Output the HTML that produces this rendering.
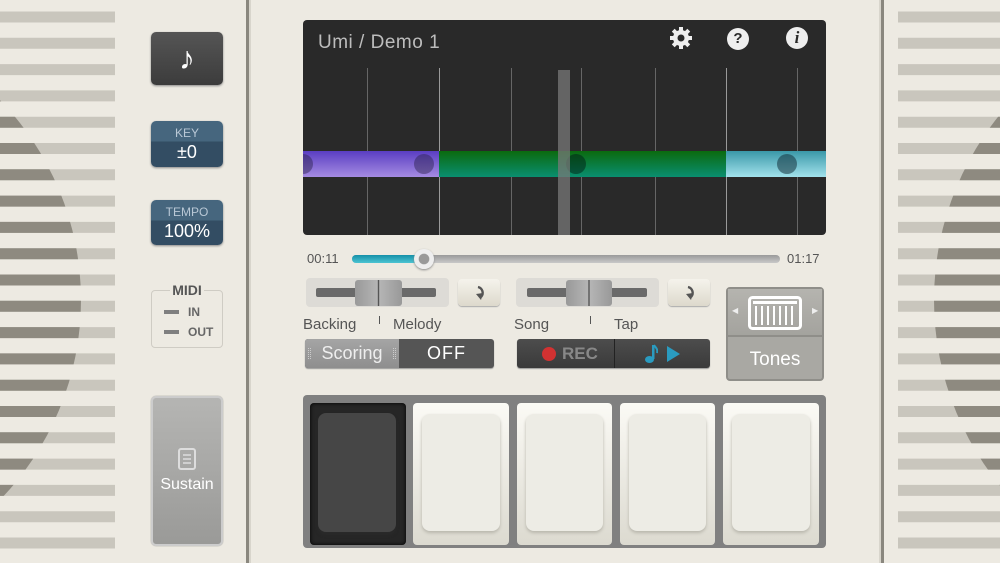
<!DOCTYPE html>
<html><head><meta charset="utf-8"><style>
*{margin:0;padding:0;box-sizing:border-box}
html,body{width:1000px;height:563px;overflow:hidden}
body{background:#edeae2;font-family:"Liberation Sans",sans-serif;position:relative}
.a{position:absolute}
.lbl{font-size:15px;color:#555}
.btn{border-radius:5px}
</style></head><body>
<svg class="a" style="left:0;top:0" width="1000" height="563">
<defs>
<clipPath id="s">
<rect x="0" y="11.5" width="115" height="11"/><rect x="0" y="37.8" width="115" height="11"/><rect x="0" y="64.1" width="115" height="11"/><rect x="0" y="90.4" width="115" height="11"/><rect x="0" y="116.7" width="115" height="11"/><rect x="0" y="143" width="115" height="11"/><rect x="0" y="169.3" width="115" height="11"/><rect x="0" y="195.6" width="115" height="11"/><rect x="0" y="221.9" width="115" height="11"/><rect x="0" y="248.2" width="115" height="11"/><rect x="0" y="274.5" width="115" height="11"/><rect x="0" y="300.8" width="115" height="11"/><rect x="0" y="327.1" width="115" height="11"/><rect x="0" y="353.4" width="115" height="11"/><rect x="0" y="379.7" width="115" height="11"/><rect x="0" y="406" width="115" height="11"/><rect x="0" y="432.3" width="115" height="11"/><rect x="0" y="458.6" width="115" height="11"/><rect x="0" y="484.9" width="115" height="11"/><rect x="0" y="511.2" width="115" height="11"/><rect x="0" y="537.5" width="115" height="11"/>
<rect x="898" y="11.5" width="102" height="11"/><rect x="898" y="37.8" width="102" height="11"/><rect x="898" y="64.1" width="102" height="11"/><rect x="898" y="90.4" width="102" height="11"/><rect x="898" y="116.7" width="102" height="11"/><rect x="898" y="143" width="102" height="11"/><rect x="898" y="169.3" width="102" height="11"/><rect x="898" y="195.6" width="102" height="11"/><rect x="898" y="221.9" width="102" height="11"/><rect x="898" y="248.2" width="102" height="11"/><rect x="898" y="274.5" width="102" height="11"/><rect x="898" y="300.8" width="102" height="11"/><rect x="898" y="327.1" width="102" height="11"/><rect x="898" y="353.4" width="102" height="11"/><rect x="898" y="379.7" width="102" height="11"/><rect x="898" y="406" width="102" height="11"/><rect x="898" y="432.3" width="102" height="11"/><rect x="898" y="458.6" width="102" height="11"/><rect x="898" y="484.9" width="102" height="11"/><rect x="898" y="511.2" width="102" height="11"/><rect x="898" y="537.5" width="102" height="11"/>
</clipPath>
<linearGradient id="sg" x1="0" y1="0" x2="0" y2="1"><stop offset="0" stop-color="#b8b5ac"/><stop offset="1" stop-color="#d0cdc4"/></linearGradient>
</defs>
<g clip-path="url(#s)">
<rect x="0" y="0" width="1000" height="563" fill="#c9c6bd"/>
<circle cx="-206" cy="300" r="287" fill="#8e8a80"/>
<circle cx="1228" cy="300" r="294" fill="#8e8a80"/>
</g>
<rect x="246" y="0" width="3" height="563" fill="#8a877e"/>
<rect x="249" y="0" width="2" height="563" fill="#d8d5cc"/>
<rect x="881" y="0" width="3" height="563" fill="#8a877e"/>
<rect x="879" y="0" width="2" height="563" fill="#d8d5cc"/>
</svg>

<div class="a btn" style="left:151px;top:32px;width:72px;height:53px;background:linear-gradient(#555,#3c3c3c);box-shadow:0 1px 2px #888;color:#fff;font-size:32px;text-align:center;line-height:52px">♪</div>
<div class="a btn" style="left:151px;top:121px;width:72px;height:46px;background:linear-gradient(#46667e 0 45%,#334d63 45%);color:#fff;text-align:center;box-shadow:0 1px 2px #888">
<div style="font-size:12px;color:#b9c8d6;margin-top:5px">KEY</div><div style="font-size:18px;margin-top:2px">±0</div></div>
<div class="a btn" style="left:151px;top:200px;width:72px;height:45px;background:linear-gradient(#46667e 0 45%,#334d63 45%);color:#fff;text-align:center;box-shadow:0 1px 2px #888">
<div style="font-size:12px;color:#b9c8d6;margin-top:5px">TEMPO</div><div style="font-size:18px;margin-top:2px">100%</div></div>
<div class="a" style="left:151px;top:290px;width:72px;height:58px;border:1px solid #cfccc4;border-radius:4px"></div>
<div class="a" style="left:170px;top:282px;width:34px;height:16px;background:#edeae2;color:#555;font-size:14px;font-weight:bold;text-align:center">MIDI</div>
<div class="a" style="left:164px;top:310px;width:15px;height:4px;background:#7f7f7f"></div>
<div class="a" style="left:188px;top:305px;font-size:12px;color:#666;font-weight:bold">IN</div>
<div class="a" style="left:164px;top:330px;width:15px;height:4px;background:#7f7f7f"></div>
<div class="a" style="left:188px;top:325px;font-size:12px;color:#666;font-weight:bold">OUT</div>
<div class="a btn" style="left:151px;top:396px;width:72px;height:150px;background:linear-gradient(#b5b5b3,#9a9a98);border:2px solid #ccc;box-shadow:0 0 1px #777;color:#fff;text-align:center">
<svg style="display:block;margin:50px auto 0" width="18" height="22" viewBox="0 0 18 22"><rect x="1" y="1" width="16" height="20" rx="2" fill="none" stroke="#ddd" stroke-width="2"/><path d="M5 7h8M5 11h8M5 15h8" stroke="#ddd" stroke-width="1.5"/></svg>
<div style="font-size:16px;margin-top:6px">Sustain</div></div>

<div class="a" style="left:303px;top:20px;width:523px;height:215px;background:#292929;border-radius:4px;overflow:hidden">
<div class="a" style="left:15px;top:12px;font-size:19px;color:#bdbdbd;letter-spacing:0.5px">Umi / Demo 1</div>
<div class="a" style="left:64px;top:48px;width:1px;height:170px;background:#666"></div>
<div class="a" style="left:136px;top:48px;width:1px;height:170px;background:#999"></div>
<div class="a" style="left:208px;top:48px;width:1px;height:170px;background:#666"></div>
<div class="a" style="left:278px;top:48px;width:1px;height:170px;background:#666"></div>
<div class="a" style="left:352px;top:48px;width:1px;height:170px;background:#666"></div>
<div class="a" style="left:423px;top:48px;width:1px;height:170px;background:#999"></div>
<div class="a" style="left:494px;top:48px;width:1px;height:170px;background:#666"></div>
<div class="a" style="left:0;top:131px;width:136px;height:26px;background:linear-gradient(#5a3ec2,#a58be2)"></div>
<div class="a" style="left:136px;top:131px;width:287px;height:26px;background:linear-gradient(#0b6a0e,#0a8e70)"></div>
<div class="a" style="left:423px;top:131px;width:100px;height:26px;background:linear-gradient(#3a98a8,#a2e2ec)"></div>
<div class="a" style="left:-10px;top:134px;width:20px;height:20px;border-radius:50%;background:rgba(40,30,70,.45)"></div>
<div class="a" style="left:111px;top:134px;width:20px;height:20px;border-radius:50%;background:rgba(40,30,70,.45)"></div>
<div class="a" style="left:263px;top:134px;width:20px;height:20px;border-radius:50%;background:rgba(0,30,20,.5)"></div>
<div class="a" style="left:474px;top:134px;width:20px;height:20px;border-radius:50%;background:rgba(20,50,60,.55)"></div>
<div class="a" style="left:255px;top:50px;width:12px;height:170px;background:rgba(120,120,120,.75)"></div>
<svg class="a" style="left:366px;top:6px" width="24" height="24" viewBox="0 0 24 24"><g fill="#eee"><circle cx="12" cy="12" r="8"/><rect x="10" y="1" width="4" height="22"/><rect x="10" y="1" width="4" height="22" transform="rotate(45 12 12)"/><rect x="10" y="1" width="4" height="22" transform="rotate(90 12 12)"/><rect x="10" y="1" width="4" height="22" transform="rotate(135 12 12)"/></g><circle cx="12" cy="12" r="3.5" fill="#292929"/></svg>
<div class="a" style="left:424px;top:8px;width:22px;height:22px;border-radius:50%;background:#eee;color:#292929;font-weight:bold;font-size:15px;text-align:center;line-height:22px">?</div>
<div class="a" style="left:483px;top:7px;width:22px;height:22px;border-radius:50%;background:#eee;color:#292929;font-weight:bold;font-style:italic;font-family:'Liberation Serif',serif;font-size:17px;text-align:center;line-height:22px">i</div>
</div>

<div class="a" style="left:307px;top:251px;font-size:13px;color:#555">00:11</div>
<div class="a" style="left:787px;top:251px;font-size:13px;color:#555">01:17</div>
<div class="a" style="left:352px;top:255px;width:428px;height:8px;border-radius:4px;background:linear-gradient(#9a9a9a,#c8c8c8)"></div>
<div class="a" style="left:352px;top:255px;width:72px;height:8px;border-radius:4px;background:linear-gradient(#1590a8,#4cc4d2)"></div>
<div class="a" style="left:414px;top:249px;width:20px;height:20px;border-radius:50%;background:radial-gradient(#999 0 35%,#eee 40%);box-shadow:0 1px 2px #888"></div>

<div class="a" style="left:306px;top:278px;width:143px;height:29px;background:#dddbd6;border-radius:4px"></div>
<div class="a" style="left:316px;top:288px;width:120px;height:9px;background:#6a6a6a;border-radius:2px"></div>
<div class="a" style="left:355px;top:280px;width:47px;height:26px;background:linear-gradient(90deg,#999,#b5b5b5 48%,#555 49%,#555 51%,#b5b5b5 52%,#999);border-radius:3px"></div>
<div class="a" style="left:458px;top:279px;width:42px;height:27px;background:linear-gradient(#f5f3ec,#ddd9cc);border-radius:4px;box-shadow:0 1px 1px #aaa"><svg class="a" style="left:12px;top:5px" width="18" height="18" viewBox="0 0 18 18"><path d="M8 3 A6 6 0 0 1 11 13" fill="none" stroke="#555" stroke-width="2.4"/><path d="M6 10 L13 9 L11 16Z" fill="#555"/></svg></div>
<div class="a" style="left:516px;top:278px;width:143px;height:29px;background:#dddbd6;border-radius:4px"></div>
<div class="a" style="left:527px;top:288px;width:120px;height:9px;background:#6a6a6a;border-radius:2px"></div>
<div class="a" style="left:566px;top:280px;width:46px;height:26px;background:linear-gradient(90deg,#999,#b5b5b5 48%,#555 49%,#555 51%,#b5b5b5 52%,#999);border-radius:3px"></div>
<div class="a" style="left:668px;top:279px;width:42px;height:27px;background:linear-gradient(#f5f3ec,#ddd9cc);border-radius:4px;box-shadow:0 1px 1px #aaa"><svg class="a" style="left:12px;top:5px" width="18" height="18" viewBox="0 0 18 18"><path d="M8 3 A6 6 0 0 1 11 13" fill="none" stroke="#555" stroke-width="2.4"/><path d="M6 10 L13 9 L11 16Z" fill="#555"/></svg></div>

<div class="a lbl" style="left:303px;top:316px">Backing</div>
<div class="a" style="left:379px;top:316px;width:1px;height:8px;background:#555"></div>
<div class="a lbl" style="left:393px;top:316px">Melody</div>
<div class="a lbl" style="left:514px;top:316px">Song</div>
<div class="a" style="left:590px;top:316px;width:1px;height:8px;background:#555"></div>
<div class="a lbl" style="left:614px;top:316px">Tap</div>

<div class="a" style="left:305px;top:339px;width:189px;height:29px;border-radius:3px;background:#555;box-shadow:0 1px 1px #999;overflow:hidden">
<div class="a" style="left:0;top:0;width:94px;height:29px;background:linear-gradient(#a5a5a5,#8e8e8e);color:#eee;font-size:18px;text-align:center;line-height:29px">Scoring</div>
<div class="a" style="left:3px;top:9px;width:3px;height:11px;border-left:1px dotted #ccc;border-right:1px dotted #ccc"></div>
<div class="a" style="left:88px;top:9px;width:3px;height:11px;border-left:1px dotted #ccc;border-right:1px dotted #ccc"></div>
<div class="a" style="left:94px;top:0;width:95px;height:29px;color:#fff;font-size:18px;text-align:center;line-height:29px;letter-spacing:1px">OFF</div></div>
<div class="a" style="left:517px;top:339px;width:193px;height:29px;border-radius:3px;background:linear-gradient(#4d4d4d,#3a3a3a);box-shadow:0 1px 1px #999">
<div class="a" style="left:25px;top:8px;width:14px;height:14px;border-radius:50%;background:#d23232"></div>
<div class="a" style="left:45px;top:5px;color:#888;font-size:17px;font-weight:bold">REC</div>
<div class="a" style="left:97px;top:0;width:1px;height:29px;background:#222"></div>
<svg class="a" style="left:127px;top:5px" width="14" height="20" viewBox="0 0 14 20"><rect x="8" y="1" width="2.5" height="14" fill="#2a9bc0"/><ellipse cx="5.5" cy="15.5" rx="4.5" ry="3.5" fill="#2a9bc0"/><path d="M10 1 C12 4 14 5 13 9" fill="none" stroke="#2a9bc0" stroke-width="2"/></svg>
<div class="a" style="left:150px;top:7px;width:0;height:0;border-left:13px solid #2a9bc0;border-top:8px solid transparent;border-bottom:8px solid transparent"></div>
</div>

<div class="a" style="left:726px;top:287px;width:98px;height:94px;border-radius:4px;background:#a9a8a3;border:2px solid #8f8e89">
<div class="a" style="left:0;top:0;width:94px;height:48px;border-bottom:2px solid #8f8e89;background:linear-gradient(#b5b4af,#a4a39e)"></div>
<svg class="a" style="left:20px;top:7px" width="54" height="34" viewBox="0 0 54 34"><rect x="1.5" y="1.5" width="51" height="31" rx="3" fill="none" stroke="#fff" stroke-width="3"/><rect x="5" y="5" width="44" height="3" fill="#fff"/><g fill="#fff"><rect x="7" y="10" width="2" height="19"/><rect x="13" y="10" width="2" height="19"/><rect x="19" y="10" width="2" height="19"/><rect x="25" y="10" width="2" height="19"/><rect x="31" y="10" width="2" height="19"/><rect x="37" y="10" width="2" height="19"/><rect x="43" y="10" width="2" height="19"/></g></svg>
<div class="a" style="left:4px;top:17px;color:#eee;font-size:8px">◀</div>
<div class="a" style="left:84px;top:17px;color:#eee;font-size:8px">▶</div>
<div class="a" style="left:0;top:60px;width:94px;text-align:center;color:#fff;font-size:19px">Tones</div>
</div>

<div class="a" style="left:303px;top:395px;width:523px;height:153px;background:#808080;border-radius:4px"></div>
<div class="a" style="left:310px;top:403px;width:96px;height:142px;border-radius:4px;background:#262626;box-shadow:inset 0 0 4px #000"><div class="a" style="left:8px;top:10px;width:78px;height:119px;border-radius:8px;background:#464646;box-shadow:0 3px 3px #2a2a2a"></div></div>
<div class="a" style="left:413px;top:403px;width:96px;height:142px;border-radius:4px;background:linear-gradient(#fbfaf5,#dcdad0)"><div class="a" style="left:9px;top:11px;width:78px;height:117px;border-radius:8px;background:#edece5;box-shadow:0 2px 3px #b8b6ac"></div></div>
<div class="a" style="left:517px;top:403px;width:95px;height:142px;border-radius:4px;background:linear-gradient(#fbfaf5,#dcdad0)"><div class="a" style="left:9px;top:11px;width:77px;height:117px;border-radius:8px;background:#edece5;box-shadow:0 2px 3px #b8b6ac"></div></div>
<div class="a" style="left:620px;top:403px;width:95px;height:142px;border-radius:4px;background:linear-gradient(#fbfaf5,#dcdad0)"><div class="a" style="left:9px;top:11px;width:77px;height:117px;border-radius:8px;background:#edece5;box-shadow:0 2px 3px #b8b6ac"></div></div>
<div class="a" style="left:723px;top:403px;width:96px;height:142px;border-radius:4px;background:linear-gradient(#fbfaf5,#dcdad0)"><div class="a" style="left:9px;top:11px;width:78px;height:117px;border-radius:8px;background:#edece5;box-shadow:0 2px 3px #b8b6ac"></div></div>
</body></html>
